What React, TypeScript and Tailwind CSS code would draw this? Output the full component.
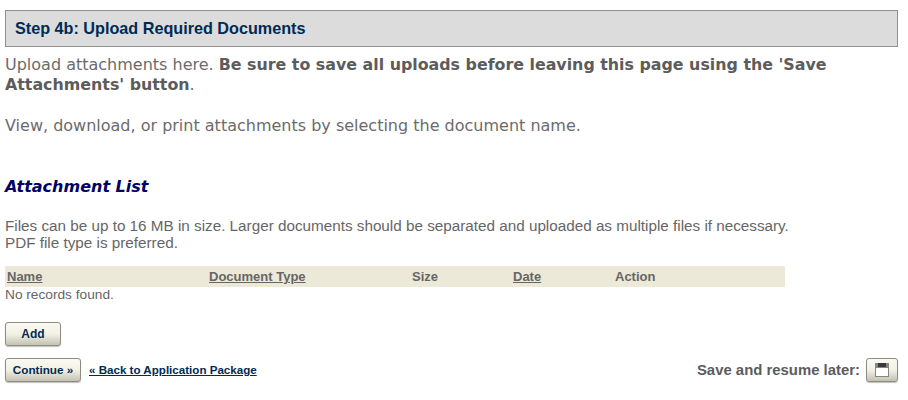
const ARIAL = "font-['Liberation_Sans',Arial,sans-serif]";
const VERDANA = "font-['DejaVu_Sans',Verdana,sans-serif]";
const BUTTON =
  "h-[24px] rounded-[3px] border border-[#8c8c80] bg-gradient-to-b from-[#fbfaf2] via-[#f3f1e4] to-[#c4c2b3] font-bold text-[#002b54] shadow-[0_1px_1px_rgba(0,0,0,0.25)]";

function SaveIcon() {
  return (
    <svg width="14" height="14" viewBox="0 0 14 14" aria-hidden="true">
      <rect width="14" height="14" fill="#858585" />
      <rect x="3" y="0" width="8" height="4" fill="#3a3a3a" />
      <rect x="1" y="5" width="12" height="8" fill="#fff" />
    </svg>
  );
}

export default function App() {
  return (
    <div className={`h-[400px] w-[908px] overflow-hidden bg-white pl-[5px] pr-[10px] pt-[10px] ${ARIAL}`}>
      <div className="flex h-[37px] items-center border border-[#8f8f8f] bg-[#dcdcdc] pl-[9px] text-[16.2px] font-bold text-[#002b54]">
        Step 4b: Upload Required Documents
      </div>

      <div className={`mt-[8px] w-[860px] text-base leading-[20px] text-[#6b6b6b] ${VERDANA}`}>
        <p>
          Upload attachments here.{" "}
          <b className="text-[15.85px] text-[#5c5c5c]">
            Be sure to save all uploads before leaving this page using the 'Save Attachments' button
          </b>
          .
        </p>
        <p className="mt-[21px]">View, download, or print attachments by selecting the document name.</p>
      </div>

      <h2 className={`mt-[40px] text-base font-bold italic leading-[22px] text-[#000066] ${VERDANA}`}>
        Attachment List
      </h2>

      <p className="mt-[19px] text-[15.25px] leading-[17px] text-[#666]">
        Files can be up to 16 MB in size. Larger documents should be separated and uploaded as multiple files if necessary.
        <br />
        PDF file type is preferred.
      </p>

      <div className="mt-[15px] grid h-[21px] w-[780px] grid-cols-[202px_203px_101px_102px_1fr] items-center bg-[#ece9d8] pl-[2px] text-[13px] font-bold text-[#666]">
        <span className="underline">Name</span>
        <span className="underline">Document Type</span>
        <span>Size</span>
        <span className="underline">Date</span>
        <span>Action</span>
      </div>
      <p className="mt-[0px] text-[13.7px] leading-[16px] text-[#666]">No records found.</p>

      <button className={`mt-[19px] block w-[56px] text-xs ${BUTTON}`}>Add</button>

      <div className="mt-[12px] flex items-center">
        <button className={`w-[76px] text-[11.7px] ${BUTTON}`}>Continue »</button>
        <a className="ml-[8px] text-[11.6px] font-bold text-[#002b54] underline">« Back to Application Package</a>
        <span className="ml-auto mr-[6px] text-[14.9px] font-bold text-[#5c5c5c]">Save and resume later:</span>
        <button className={`flex w-[32px] items-center justify-center ${BUTTON}`}>
          <SaveIcon />
        </button>
      </div>
    </div>
  );
}
